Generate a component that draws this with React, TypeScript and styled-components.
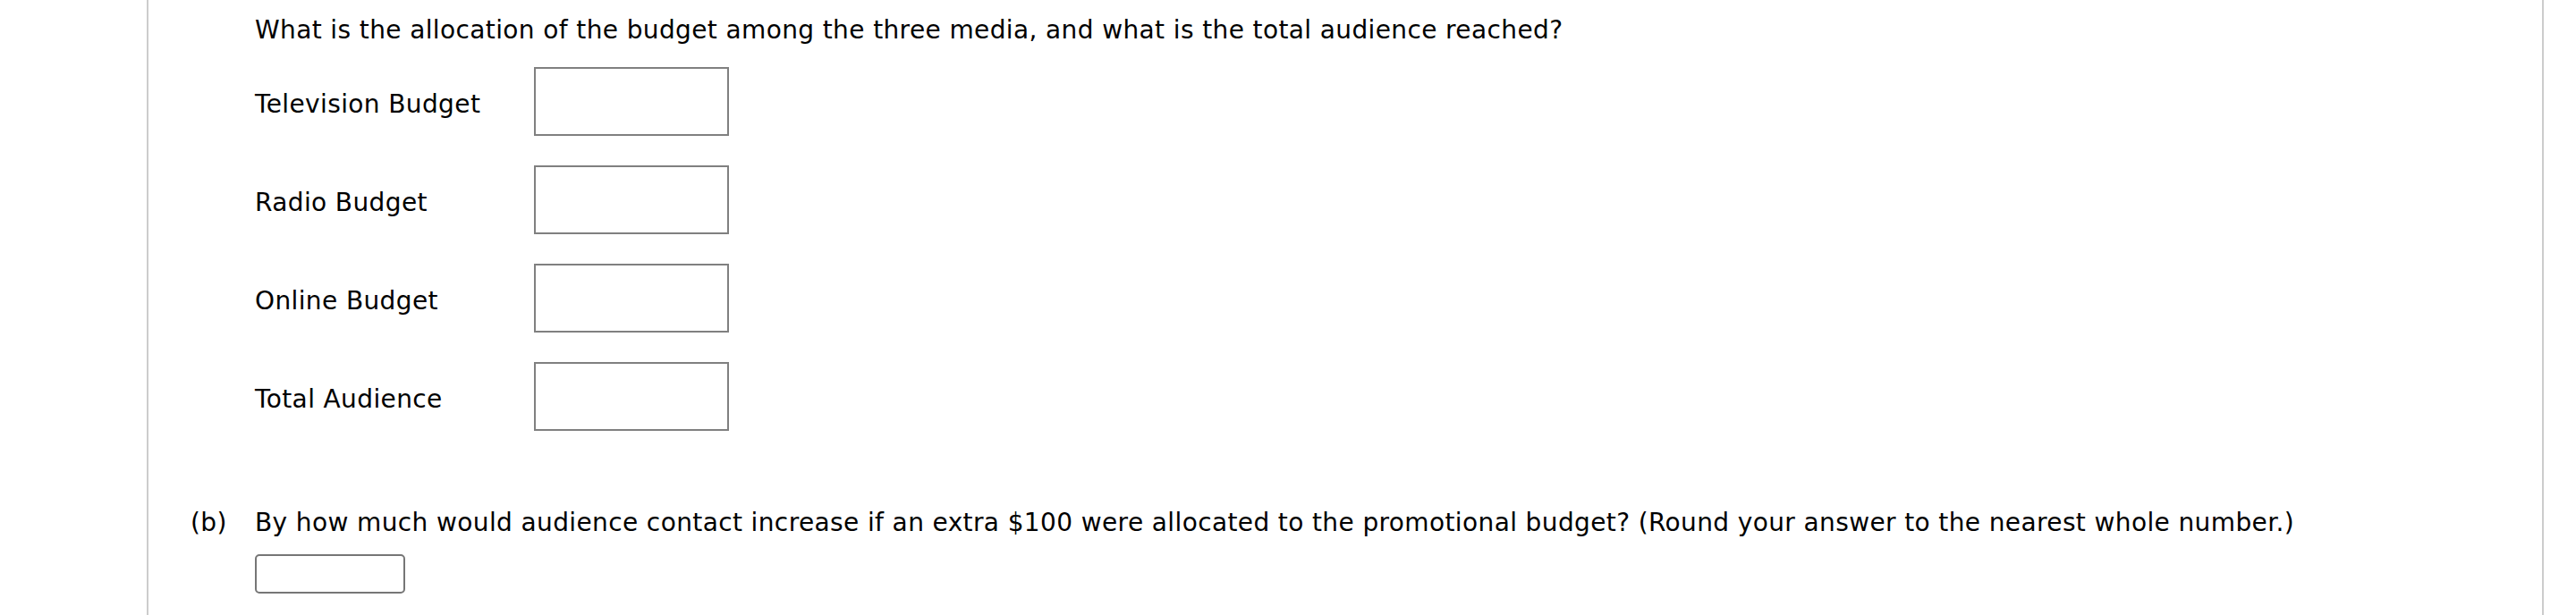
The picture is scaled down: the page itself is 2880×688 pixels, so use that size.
import styled, { createGlobalStyle } from "styled-components";

const GlobalStyle = createGlobalStyle`
  html, body {
    margin: 0;
    padding: 0;
    background: #ffffff;
  }
  body {
    font-family: "DejaVu Sans", Verdana, sans-serif;
    color: #000000;
  }
`;

const Page = styled.div`
  display: flex;
  min-height: 688px;
  padding-left: 164px;
`;

const Sheet = styled.div`
  box-sizing: border-box;
  width: 2680px;
  min-height: 688px;
  border-left: 2px solid #cccccc;
  border-right: 2px solid #cccccc;
  padding-top: 16px;
`;

const Prompt = styled.p`
  margin: 0 0 0 119px;
  font-size: 28px;
  line-height: 36px;
  letter-spacing: 0.38px;
`;

const AnswerGrid = styled.div`
  display: grid;
  grid-template-columns: 312px 218px;
  row-gap: 33px;
  margin: 23px 0 0 119px;
`;

const FieldLabel = styled.label`
  display: flex;
  align-items: center;
  padding-top: 6px;
  font-size: 28px;
  line-height: 36px;
  letter-spacing: 0.38px;
`;

const BoxInput = styled.input`
  box-sizing: border-box;
  width: 218px;
  height: 77px;
  margin: 0;
  border: 2px solid #808080;
  border-radius: 0;
  background: #ffffff;
  outline: none;
`;

const Part = styled.div`
  display: grid;
  grid-template-columns: 72px auto;
  margin: 85px 0 0 47px;
`;

const PartTag = styled.span`
  font-size: 28px;
  line-height: 36px;
  letter-spacing: 0.38px;
`;

const PartBody = styled.div`
  display: flex;
  flex-direction: column;
  align-items: flex-start;
  gap: 17px;
`;

const SmallInput = styled.input`
  box-sizing: border-box;
  width: 168px;
  height: 44px;
  margin: 0;
  border: 2px solid #767676;
  border-radius: 5px;
  background: #ffffff;
  outline: none;
`;

const fields = ["Television Budget", "Radio Budget", "Online Budget", "Total Audience"];

export default function App() {
  return (
    <>
      <GlobalStyle />
      <Page>
        <Sheet>
          <Prompt>
            What is the allocation of the budget among the three media, and what is the total audience reached?
          </Prompt>
          <AnswerGrid>
            {fields.map((f) => (
              <>
                <FieldLabel key={f + "-l"}>{f}</FieldLabel>
                <BoxInput key={f + "-i"} type="text" aria-label={f} />
              </>
            ))}
          </AnswerGrid>
          <Part>
            <PartTag>(b)</PartTag>
            <PartBody>
              <PartTag>
                By how much would audience contact increase if an extra $100 were allocated to the promotional budget? (Round your answer to the nearest whole number.)
              </PartTag>
              <SmallInput type="text" />
            </PartBody>
          </Part>
        </Sheet>
      </Page>
    </>
  );
}
